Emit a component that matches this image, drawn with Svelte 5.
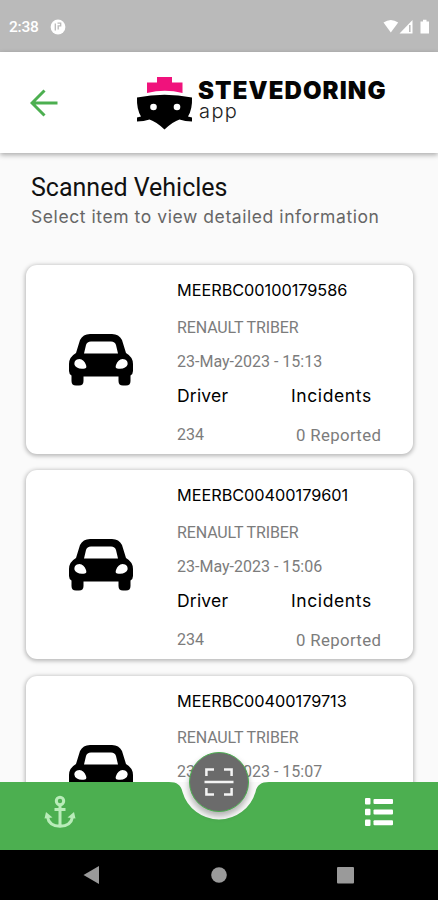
<script>
  const vehicles = [
    { vin: 'MEERBC00100179586', model: 'RENAULT TRIBER', date: '23-May-2023 - 15:13', driver: '234', incidents: 0 },
    { vin: 'MEERBC00400179601', model: 'RENAULT TRIBER', date: '23-May-2023 - 15:06', driver: '234', incidents: 0 },
    { vin: 'MEERBC00400179713', model: 'RENAULT TRIBER', date: '23-May-2023 - 15:07', driver: '234', incidents: 0 }
  ];
</script>

<div class="screen">
  <div class="status">
    <span class="time">2:38</span>
    <svg class="pocket" width="16" height="16" viewBox="0 0 16 16">
      <circle cx="8" cy="8" r="7.4" fill="#fff" />
      <path d="M5.300 4.500V11.500M7.500 4.200h3.200v2.600H8.200v3.800" fill="none" stroke="#bababa" stroke-width="1.300" />
    </svg>
    <svg class="signals" width="50" height="16" viewBox="0 0 50 16">
      <path d="M2.500 3.500Q9.800-1.500 17.200 3.500L9.800 13.500Z" fill="#fff" />
      <path d="M18.500 14.500L31.500 1V14.500Z" fill="#fff" />
      <path d="M28.800 6V13" stroke="#bababa" stroke-width="1.500" />
      <path d="M39.500 2.500h2.500V.800h3.500v1.700H48V14.500h-8.500Z" fill="#fff" />
    </svg>
  </div>

  <header>
    <svg class="back" width="28" height="28" viewBox="0 0 28 28">
      <path d="M14.500 1.500L2 14L14.500 26.500M2 14H27.500" fill="none" stroke="#4caf50" stroke-width="3" />
    </svg>
    <svg class="ship" width="58" height="56" viewBox="0 0 58 56">
      <path d="M21 2H36V7.500H46.500V18Q29 13.500 11 18V7.500H21Z" fill="#f0127c" />
      <path d="M1 22.500Q28.500 17 56 22.500Q56.500 34 52 41.500L56 42.500V46.500Q49 46.500 43.500 44.500Q37 46.500 28.500 54.500Q20 46.500 13.500 44.500Q8 46.500 1 46.500V42.500L5 41.500Q.500 34 1 22.500Z" />
      <circle cx="17.500" cy="32" r="3.300" fill="#fff" />
      <circle cx="41" cy="32" r="3.300" fill="#fff" />
    </svg>
    <div class="brand">
      <b>STEVEDORING</b>
      <span>app</span>
    </div>
  </header>

  <main>
    <h1>Scanned Vehicles</h1>
    <p class="hint">Select item to view detailed information</p>
    {#each vehicles as v}
      <article>
        <svg class="car" width="66" height="54" viewBox="0 0 66 54">
          <path fill-rule="evenodd" d="M22 1H44Q51 1 54 7L58 20Q65 24 65 31V38Q65 41 62.500 42.500V48Q62.500 52.500 58 52.500H55Q50.500 52.500 50.500 48V43.500H15.500V48Q15.500 52.500 11 52.500H8Q3.500 52.500 3.500 48V42.500Q1 41 1 38V31Q1 24 8 20L12 7Q15 1 22 1ZM23 8.500Q19 8.500 18 12L16 20.500H50L48 12Q47 8.500 43 8.500ZM7 28Q5 32 9 34.500Q12 36.500 17 35.500Q19 35 18 32Q16 26.500 11.500 26Q8.500 26 7 28ZM59 28Q61 32 57 34.500Q54 36.500 49 35.500Q47 35 48 32Q50 26.500 54.500 26Q57.500 26 59 28Z" />
        </svg>
        <div class="info">
          <div class="vin">{v.vin}</div>
          <div class="model">{v.model}</div>
          <div class="date">{v.date}</div>
          <div class="pair labels"><span class="driver">Driver</span><span class="incidents">Incidents</span></div>
          <div class="pair values"><span>{v.driver}</span><span class="count">{v.incidents} Reported</span></div>
        </div>
      </article>
    {/each}
  </main>

  <nav class="tabs">
    <svg class="bar" width="438" height="68" viewBox="0 0 438 68">
      <path d="M0 0H169C177 0 181 3 182.500 10A38 38 0 0 0 255.500 10C257 3 261 0 269 0H438V68H0Z" fill="#4caf50" />
    </svg>
    <svg class="anchor" width="32" height="34" viewBox="0 0 32 34" fill="none" stroke="#b9ecb9" stroke-width="3">
      <circle cx="16" cy="6" r="3.700" />
      <path d="M16 10V31M10.500 14.500H21.500M3.500 22Q5 31 16 31.200Q27 31 28.500 22" />
      <path d="M.500 23.500L2 17L8.500 22.500ZM31.500 23.500L30 17L23.500 22.500Z" fill="#b9ecb9" stroke="none" />
    </svg>
    <button class="scan" aria-label="Scan">
      <svg width="32" height="32" viewBox="0 0 32 32" fill="none" stroke="#f4f4f4" stroke-width="2.500">
        <path d="M3.400 10V3.400H11M21 3.400H28.600V10M3.400 22V28.600H11M21 28.600H28.600V22M1.500 16H30.500" />
      </svg>
    </button>
    <svg class="list" width="28" height="28" viewBox="0 0 28 28" fill="#fff">
      <rect x="0" y="0" width="5.500" height="6.500" rx="1" /><rect x="8.500" y="1" width="19.500" height="5" rx="1" />
      <rect x="0" y="10.800" width="5.500" height="6.500" rx="1" /><rect x="8.500" y="11.600" width="19.500" height="5" rx="1" />
      <rect x="0" y="21.500" width="5.500" height="6.500" rx="1" /><rect x="8.500" y="22.300" width="19.500" height="5" rx="1" />
    </svg>
  </nav>

  <footer>
    <svg width="17" height="18" viewBox="0 0 17 18"><path d="M.500 9L16 0V18Z" fill="#9a9a9a" /></svg>
    <svg width="16" height="16" viewBox="0 0 16 16"><circle cx="8" cy="8" r="7.800" fill="#9a9a9a" /></svg>
    <svg width="17" height="17" viewBox="0 0 17 17"><rect width="17" height="16.500" rx="1" fill="#9a9a9a" /></svg>
  </footer>
</div>

<style>
  :global(body) { margin: 0; background: #000; }
  .screen {
    width: 438px;
    height: 900px;
    display: flex;
    flex-direction: column;
    overflow: hidden;
    background: #fafafa;
    font-family: Roboto, sans-serif;
  }
  .status {
    flex: none;
    box-sizing: border-box;
    height: 52px;
    display: flex;
    align-items: center;
    padding: 2px 7px 0 9px;
    background: #bababa;
    color: #fff;
  }
  .time { width: 41px; font-size: 15.5px; font-weight: 500; letter-spacing: -0.2px; }
  .signals { margin-left: auto; }
  header {
    flex: none;
    position: relative;
    z-index: 1;
    height: 101px;
    display: flex;
    background: #fff;
    box-shadow: 0 2px 5px rgba(0, 0, 0, 0.32);
  }
  .back { margin: 37px 0 0 30px; }
  .ship { margin: 23px 0 0 78px; }
  .brand { margin: 27px 0 0 4px; color: #050505; display: flex; flex-direction: column; }
  .brand b { font: 900 24px/24px Inter, sans-serif; letter-spacing: 1.1px; }
  .brand span { font: 300 20px/16px Inter, sans-serif; color: #222; letter-spacing: 1.4px; margin-left: 1px; }
  main {
    flex: 1;
    min-height: 0;
    overflow: hidden;
    padding: 18px 25px 0 26px;
  }
  h1 { margin: 0 0 0 5px; font-weight: 400; font-size: 25px; line-height: 34px; color: #111; }
  .hint {
    margin: 0 0 36px 5px;
    font: 400 17.5px/24px Inter, sans-serif;
    letter-spacing: 0.57px;
    color: #666;
    white-space: nowrap;
  }
  article {
    height: 189px;
    margin-bottom: 16.3px;
    display: flex;
    border-radius: 11px;
    background: #fff;
    box-shadow: 0 1px 4px 1px rgba(0, 0, 0, 0.27);
  }
  .car { margin: 68px 43px 0 42px; flex: none; }
  .info { flex: 1; padding-top: 14px; color: #7c7c7c; font-size: 16px; }
  .vin { font: 400 16.3px/22px Inter, sans-serif; color: #000; letter-spacing: -0.03px; }
  .model { margin-top: 15.500px; line-height: 22px; letter-spacing: -0.12px; }
  .date { margin-top: 12px; line-height: 22px; }
  .pair { display: flex; line-height: 22px; }
  .labels { margin-top: 12.500px; font-family: Inter, sans-serif; font-size: 17.5px; color: #000; }
  .values { margin-top: 17px; }
  .labels .driver { width: 114px; letter-spacing: 0.2px; }
  .labels .incidents { letter-spacing: 0.6px; }
  .values span:first-child { width: 119px; }
  .count { font-size: 16.8px; letter-spacing: 0.35px; }
  .tabs {
    flex: none;
    position: relative;
    z-index: 2;
    height: 68px;
    display: flex;
    align-items: flex-start;
    justify-content: space-between;
    padding: 0 45px 0 44px;
  }
  .bar { position: absolute; left: 0; top: 0; }
  .anchor { position: relative; margin-top: 13px; }
  .list { position: relative; margin-top: 16px; }
  .scan {
    position: absolute;
    left: 189px;
    top: -30px;
    width: 60px;
    height: 60px;
    box-sizing: border-box;
    padding: 0;
    border: 1.5px solid #4caf50;
    border-radius: 50%;
    background: #6b6b6b;
    box-shadow: 0 4px 6px rgba(0, 0, 0, 0.3);
    display: flex;
    align-items: center;
    justify-content: center;
  }
  footer {
    flex: none;
    box-sizing: border-box;
    height: 50px;
    display: flex;
    align-items: center;
    justify-content: space-between;
    padding: 0 84px 0 83px;
    background: #000;
  }
</style>
